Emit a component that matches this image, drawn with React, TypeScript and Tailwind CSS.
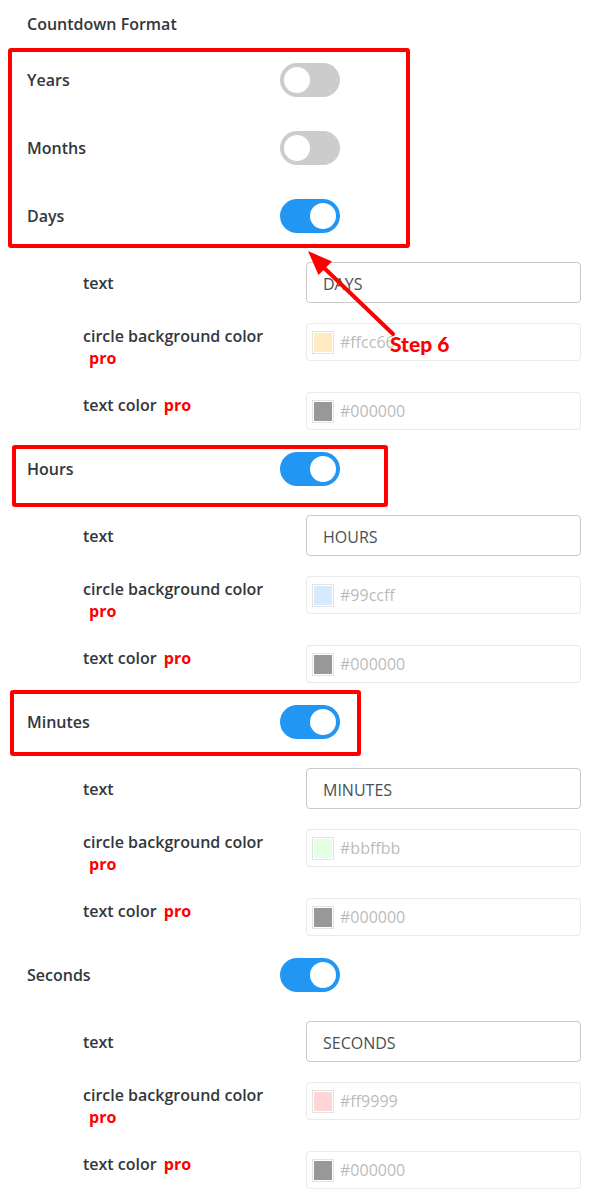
import React from "react";

function Toggle({ on }: { on: boolean }) {
  return (
    <div
      className={
        on
          ? "w-[60px] h-[34px] rounded-full flex items-center justify-end px-[4px] bg-[#2196f3]"
          : "w-[60px] h-[34px] rounded-full flex items-center justify-start px-[4px] bg-[#cccccc]"
      }
    >
      <div className="w-[26px] h-[26px] rounded-full bg-white" />
    </div>
  );
}

const labelCls = "text-[16px] font-semibold text-[#32373c] leading-[22px]";

function ToggleRow({ label, on }: { label: string; on: boolean }) {
  return (
    <div className="flex items-center h-[68px]">
      <div className={"w-[280px] pl-[27px] " + labelCls}>{label}</div>
      <Toggle on={on} />
    </div>
  );
}

function Pro({ className }: { className?: string }) {
  return <span className={"text-[#ff0000] font-bold " + (className ?? "")}>pro</span>;
}

function ColorInput({ swatch, value }: { swatch: string; value: string }) {
  return (
    <div className="w-[275px] h-[38px] border border-[#c9c9c9] rounded-[4px] opacity-40 flex items-center pl-[5px] gap-[6px]">
      <div className="w-[22px] h-[23px] border border-[#bbbbbb] p-[1px] bg-white">
        <div className="w-full h-full" style={{ backgroundColor: swatch }} />
      </div>
      <span className="text-[16px] font-normal text-[#555555]">{value}</span>
    </div>
  );
}

function Section({
  label,
  text,
  circle,
}: {
  label: string;
  text: string;
  circle: string;
}) {
  return (
    <div className="flex flex-col">
      <ToggleRow label={label} on={true} />
      <div className="flex h-[61px] pt-[12px]">
        <div className={"w-[306px] pl-[83px] h-[41px] flex items-center " + labelCls}>text</div>
        <div className="w-[275px] h-[41px] border border-[#c9c9c9] rounded-[4px] flex items-center pl-[16px] pt-[2px] text-[16px] font-normal text-[#4a4f55]">
          {text}
        </div>
      </div>
      <div className="flex h-[69px] pt-[12px]">
        <div className={"w-[306px] pl-[83px] pt-[2px] " + labelCls}>
          circle background color
          <br />
          <Pro className="ml-[6px]" />
        </div>
        <ColorInput swatch={circle} value={circle} />
      </div>
      <div className="flex h-[55px] pt-[12px]">
        <div className={"w-[306px] pl-[83px] pt-[2px] " + labelCls}>
          text color <Pro className="ml-[3px]" />
        </div>
        <ColorInput swatch="#000000" value="#000000" />
      </div>
    </div>
  );
}

export default function App() {
  return (
    <div className="relative w-[600px] min-h-[1201px] bg-white overflow-hidden font-['Open_Sans',sans-serif]">
      <div className={"h-[46px] pt-[13px] pl-[27px] " + labelCls}>Countdown Format</div>
      <ToggleRow label="Years" on={false} />
      <ToggleRow label="Months" on={false} />
      <Section label="Days" text="DAYS" circle="#ffcc66" />
      <Section label="Hours" text="HOURS" circle="#99ccff" />
      <Section label="Minutes" text="MINUTES" circle="#bbffbb" />
      <Section label="Seconds" text="SECONDS" circle="#ff9999" />

      {/* annotation boxes */}
      <div className="absolute left-[8px] top-[48px] w-[402px] h-[200px] border-[4px] border-[#ff0000] rounded-[3px]" />
      <div className="absolute left-[12px] top-[445px] w-[376px] h-[62px] border-[4px] border-[#ff0000] rounded-[3px]" />
      <div className="absolute left-[10px] top-[690px] w-[351px] h-[66px] border-[4px] border-[#ff0000] rounded-[3px]" />

      {/* arrow */}
      <svg className="absolute left-0 top-0" width="600" height="400" viewBox="0 0 600 400">
        <line x1="393" y1="334" x2="320" y2="264" stroke="#ff0000" strokeWidth="4" strokeLinecap="round" />
        <polygon points="308,251 318.5,275 332,261.5" fill="#ff0000" />
      </svg>
      <div className="absolute left-[390px] top-[331px] text-[21px] leading-[26px] font-black text-[#ff0000] font-['Lato',sans-serif] [text-shadow:0_0_2px_#fff,0_0_2px_#fff,0_0_2px_#fff]">
        Step 6
      </div>
    </div>
  );
}
